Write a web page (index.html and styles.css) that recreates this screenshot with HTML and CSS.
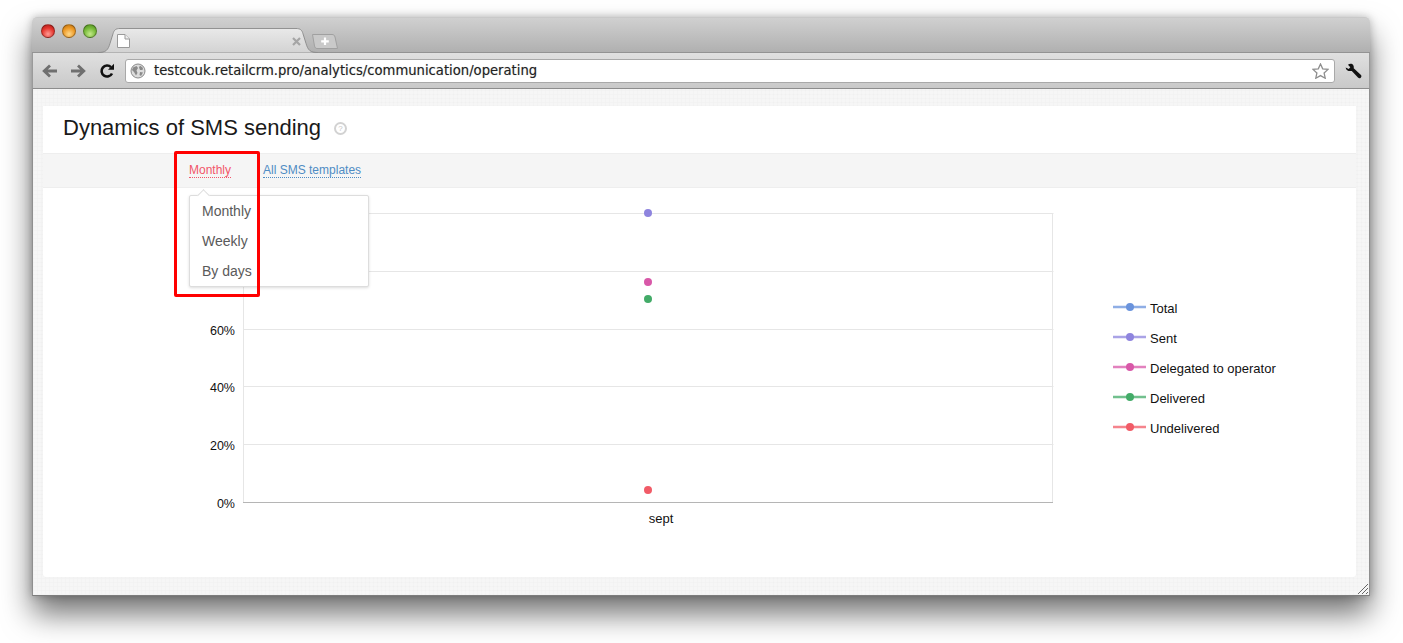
FILE: index.html
```html
<!DOCTYPE html>
<html lang="en">
<head>
<meta charset="utf-8">
<title>Dynamics of SMS sending</title>
<link rel="stylesheet" href="styles.css">
</head>
<body>
<div class="window">
  <header class="tabstrip">
    <div class="lights">
      <span class="light light-red"></span>
      <span class="light light-yellow"></span>
      <span class="light light-green"></span>
    </div>
    <div class="tab">
      <svg class="tab-shape" width="220" height="25" viewBox="0 0 220 26" preserveAspectRatio="none">
        <path d="M0 25.5C8 25.5 10 23 12 16L15 6C16 2 18 .5 22 .5H198C202 .5 204 2 205 6L208 16C210 23 212 25.5 220 25.5" fill="url(#tabfill)" stroke="#8f8f8f"/>
        <defs><linearGradient id="tabfill" x1="0" y1="0" x2="0" y2="1"><stop offset="0" stop-color="#e9e9e9"/><stop offset="1" stop-color="#d3d3d3"/></linearGradient></defs>
      </svg>
      <svg class="doc" width="13" height="14" viewBox="0 0 13 14"><path d="M.5.5H8L12.5 5V13.500H.5Z" fill="#fff" stroke="#9a9a9a"/><path d="M8 .5V5H12.500" fill="#eee" stroke="#9a9a9a"/></svg>
      <svg class="close" width="9" height="9" viewBox="0 0 9 9"><path d="M1 1L8 8M8 1L1 8" stroke="#a5a5a5" stroke-width="2.200"/></svg>
    </div>
    <svg class="newtab" width="26" height="15" viewBox="0 0 26 15"><path d="M.5.500H20C22 .5 22.500 1.500 23 3L25.500 14.500H5C3.500 14.500 3 13.500 2.500 12Z" fill="#c9c9c9" stroke="#a0a0a0"/><path d="M13 3.500V11M9.200 7.300H16.800" stroke="#fff" stroke-width="2.200"/></svg>
  </header>
  <nav class="toolbar">
    <svg class="nav-icon" width="16" height="14" viewBox="0 0 16 14"><path d="M15 7H3M8 1.500L2.200 7L8 12.500" fill="none" stroke="#6f6f6f" stroke-width="2.800"/></svg>
    <svg class="nav-icon" width="16" height="14" viewBox="0 0 16 14"><path d="M1 7H13M8 1.500L13.800 7L8 12.500" fill="none" stroke="#6f6f6f" stroke-width="2.800"/></svg>
    <svg class="nav-icon nav-reload" width="16" height="16" viewBox="0 0 16 16"><path d="M13 10.500A5.500 5.500 0 1 1 12 4.200" fill="none" stroke="#111" stroke-width="2.600"/><path d="M9 6.800H15V.8Z" fill="#111"/></svg>
    <div class="omnibox">
      <svg class="globe" width="16" height="16" viewBox="0 0 16 16"><circle cx="8" cy="8" r="7" fill="#dcdcdc" stroke="#8a8a8a"/><path d="M3 4.500L6.500 3L8 5L6.500 7.500L7.500 10L6 12.500L4 9L2 7ZM10 2.500L13 5L12.500 7L10 7L9 4.500ZM10 9L13 9.500L11 13L9.500 12Z" fill="#8a8a8a"/></svg>
      <span class="url">testcouk.retailcrm.pro/analytics/communication/operating</span>
      <svg class="star" width="17" height="16" viewBox="0 0 17 16"><path d="M8.500 1L10.700 5.800L16 6.400L12.100 10L13.200 15.200L8.500 12.600L3.800 15.200L4.900 10L1 6.400L6.300 5.800Z" fill="#fff" stroke="#8e8e8e" stroke-width="1.300"/></svg>
    </div>
    <svg class="wrench" width="17" height="16" viewBox="0 0 16 15"><path d="M.6 4.200L3.500 5.700L5 3.900L2.800 1.500C5 .2 7.300.6 8 2.500C8.400 3.600 8.300 4.500 8.200 5L14.800 11C15.800 12 15.600 13 14.800 13.800C14 14.500 13 14.500 12.200 13.600L6.400 7.400C4 8 1 7.400.6 4.200Z" fill="#111"/></svg>
  </nav>
  <main class="viewport">
    <section class="panel">
      <div class="heading">
        <h1 class="title">Dynamics of SMS sending</h1>
        <span class="help">?</span>
      </div>
      <div class="filters">
        <a class="filter filter-active">Monthly</a>
        <a class="filter filter-link">All SMS templates</a>
        <div class="dropdown">
          <div class="dropdown-item">Monthly</div>
          <div class="dropdown-item">Weekly</div>
          <div class="dropdown-item">By days</div>
        </div>
        <div class="highlight"></div>
      </div>
      <svg class="chart" width="1313" height="389" viewBox="43 188 1313 389">
        <g class="grid">
          <path d="M243.500 213.500H1053.500M243.500 271.500H1053.500M243.500 329.500H1053.500M243.500 386.500H1053.500M243.500 444.500H1053.500M243.500 213.500V502M1052.500 213.500V502"/>
        </g>
        <path class="axis" d="M243 502.500H1053"/>
        <g class="tick">
          <text x="235" y="335">60%</text>
          <text x="235" y="392">40%</text>
          <text x="235" y="450">20%</text>
          <text x="235" y="508">0%</text>
        </g>
        <text class="xlabel" x="661" y="523">sept</text>
        <circle class="c-sent" cx="648" cy="213" r="4"/>
        <circle class="c-op" cx="648" cy="282" r="4"/>
        <circle class="c-del" cx="648" cy="299" r="4"/>
        <circle class="c-und" cx="648" cy="490" r="4"/>
        <g class="legend">
          <g class="c-total"><path d="M1113 307H1146" /><circle cx="1130" cy="307" r="4"/><text x="1150" y="313">Total</text></g>
          <g class="c-sent"><path d="M1113 337H1146" /><circle cx="1130" cy="337" r="4"/><text x="1150" y="343">Sent</text></g>
          <g class="c-op"><path d="M1113 367H1146" /><circle cx="1130" cy="367" r="4"/><text x="1150" y="373">Delegated to operator</text></g>
          <g class="c-del"><path d="M1113 397H1146" /><circle cx="1130" cy="397" r="4"/><text x="1150" y="403">Delivered</text></g>
          <g class="c-und"><path d="M1113 427H1146" /><circle cx="1130" cy="427" r="4"/><text x="1150" y="433">Undelivered</text></g>
        </g>
      </svg>
    </section>
    <svg class="grip" width="12" height="12" viewBox="0 0 12 12"><path d="M11 1L1 11M11 5L5 11M11 9L9 11" stroke="#666" stroke-width="1"/></svg>
  </main>
</div>
</body>
</html>
```
FILE: styles.css
```css
* { box-sizing: border-box; }
html, body { margin: 0; height: 100%; background: #fff; overflow: hidden; }
body { padding: 17px 33px 0 32px; font-family: "Liberation Sans", Arial, sans-serif; }

.window {
  width: 1338px;
  height: 579px;
  border-radius: 5px 5px 0 0;
  box-shadow: 0 18px 30px rgba(0,0,0,.55), 0 0 8px rgba(0,0,0,.25);
  display: flex;
  flex-direction: column;
  overflow: visible;
}

.tabstrip {
  height: 36px;
  flex: none;
  display: flex;
  align-items: flex-start;
  background: linear-gradient(#d0d0d0, #b0b0b0);
  border-radius: 5px 5px 0 0;
  border-top: 1px solid #c9c9c9;
  border-bottom: 1px solid #939393;
  position: relative;
}
.lights { display: flex; gap: 7px; padding: 6px 0 0 9px; width: 66px; flex: none; }
.light { width: 14px; height: 14px; border-radius: 50%; border: 1px solid rgba(0,0,0,.3); flex: none; }
.light-red { background: radial-gradient(circle at 50% 75%, #ff9a94, #e5372f 55%, #a51a17); }
.light-yellow { background: radial-gradient(circle at 50% 75%, #ffd88a, #ee9a26 55%, #b86e10); }
.light-green { background: radial-gradient(circle at 50% 75%, #c4ea8a, #78bb3a 55%, #4d8a1e); }

.tab {
  width: 220px;
  height: 25px;
  margin-top: 10px;
  position: relative;
  flex: none;
  display: flex;
  align-items: flex-start;
  justify-content: space-between;
  padding: 6px 15px 0 19px;
  z-index: 1;
}
.tab-shape { position: absolute; left: 0; top: 0; }
.doc, .close { position: relative; flex: none; }
.close { margin: 3px 2px 0 0; }
.newtab { margin: 16px 0 0 -6px; flex: none; }

.toolbar {
  height: 36px;
  flex: none;
  display: flex;
  align-items: center;
  padding: 0 9px;
  background: linear-gradient(#e0e0e0, #c9c9c9);
  border-bottom: 1px solid #8d8d8d;
  border-left: 1px solid #9a9a9a;
  border-right: 1px solid #9a9a9a;
}
.nav-icon { flex: none; margin-right: 12px; }
.nav-reload { margin-left: 1px; margin-right: 10px; }
.omnibox {
  width: 1210px;
  height: 24px;
  display: flex;
  align-items: center;
  gap: 8px;
  padding: 0 5px 0 4px;
  background: #fff;
  border: 1px solid #a9a9a9;
  border-radius: 3px;
  flex: none;
}
.globe { flex: none; }
.url { font: 13.18px "DejaVu Sans", sans-serif; color: #222; white-space: nowrap; flex: 1; text-shadow: 0 0 1px rgba(0,0,0,.3); }
.star { flex: none; }
.wrench { flex: none; margin-left: 10px; }

.viewport {
  flex: 1;
  min-height: 0;
  padding: 17px 14px 18px 10px;
  background-color: #f6f6f6;
  background-image:
    repeating-linear-gradient(0deg, rgba(0,0,0,.012) 0 1px, transparent 1px 4px),
    repeating-linear-gradient(90deg, rgba(0,0,0,.012) 0 1px, transparent 1px 4px);
  border-left: 1px solid #8f8f8f;
  border-right: 1px solid #8f8f8f;
  border-bottom: 1px solid #7d7d7d;
  position: relative;
}
.panel {
  height: 100%;
  width: 1313px;
  background: #fff;
  border-radius: 0 0 3px 3px;
  box-shadow: 0 0 2px rgba(0,0,0,.04);
  display: flex;
  flex-direction: column;
}
.heading {
  height: 47px;
  flex: none;
  display: flex;
  align-items: center;
  gap: 13px;
  padding: 0 0 4px 20px;
}
.title { margin: 0; font-size: 22px; font-weight: 400; color: #1a1a1a; line-height: 42px; }
.help {
  width: 13px;
  height: 13px;
  border: 2px solid #d2d2d2;
  border-radius: 50%;
  color: #c4c4c4;
  font-size: 8px;
  line-height: 9px;
  text-align: center;
  flex: none;
  margin-top: 2px;
}

.filters {
  height: 35px;
  flex: none;
  display: flex;
  align-items: center;
  gap: 32px;
  padding-left: 146px;
  background: #f5f5f5;
  border-top: 1px solid #eee;
  border-bottom: 1px solid #eee;
  position: relative;
}
.filter { font-size: 12px; line-height: 14px; border-bottom: 1px dotted currentColor; }
.filter-active { color: #f2566a; }
.filter-link { color: #4f8cc4; }

.dropdown {
  position: absolute;
  left: 146px;
  top: 41px;
  width: 180px;
  height: 92px;
  padding-top: 1px;
  background: #fff;
  border: 1px solid #ddd;
  border-radius: 2px;
  box-shadow: 0 1px 3px rgba(0,0,0,.14);
  z-index: 2;
}
.dropdown::before {
  content: "";
  position: absolute;
  left: 9px;
  top: -5px;
  width: 8px;
  height: 8px;
  background: #fff;
  border-left: 1px solid #ddd;
  border-top: 1px solid #ddd;
  transform: rotate(45deg);
}
.dropdown-item { height: 30px; line-height: 29px; padding-left: 12px; font-size: 14px; color: #5a5a5a; position: relative; }

.highlight {
  position: absolute;
  left: 131px;
  top: -3px;
  width: 86px;
  height: 146px;
  border: 3px solid #f00;
  border-radius: 2px;
  z-index: 3;
}

.chart { display: block; flex: none; }
.grid path { stroke: #e6e6e6; fill: none; stroke-width: 1; }
.axis { stroke: #b5b5b5; fill: none; stroke-width: 1; }
.chart text { font: 13px "Liberation Sans", Arial, sans-serif; fill: #111; }
.chart .tick text { font-size: 12.5px; text-anchor: end; }
.xlabel { text-anchor: middle; }
.legend path { stroke-width: 2.400; opacity: .75; fill: none; }
.c-total { fill: #6a93dc; stroke: #6a93dc; }
.c-sent { fill: #8e84de; stroke: #8e84de; }
.c-op { fill: #d858a8; stroke: #d858a8; }
.c-del { fill: #43ab68; stroke: #43ab68; }
.c-und { fill: #f15b67; stroke: #f15b67; }
.chart circle { stroke: none; }
.legend text { stroke: none; }

.grip { position: absolute; right: 0; bottom: 0; }
```
